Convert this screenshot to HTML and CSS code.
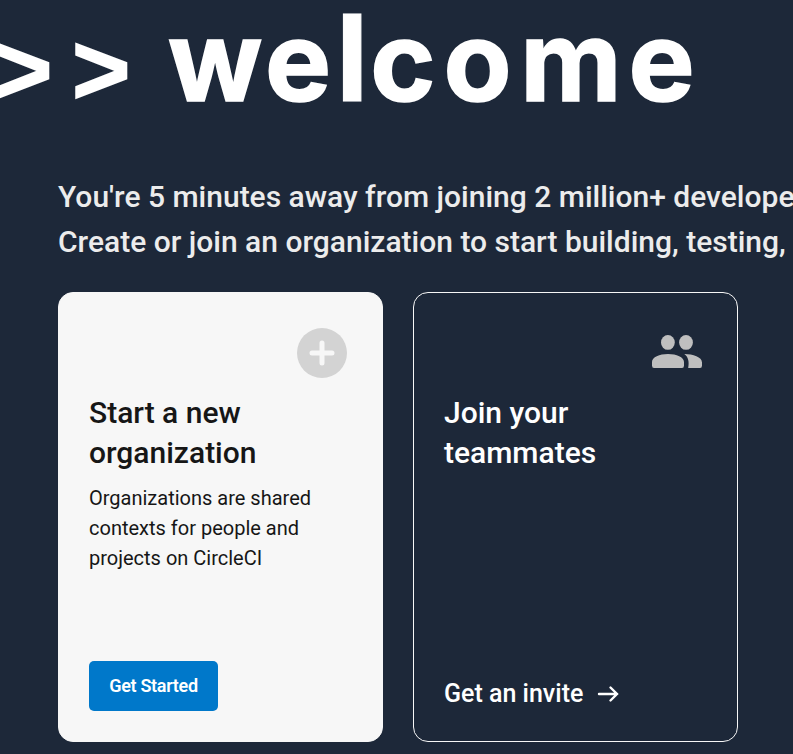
FILE: index.html
```html
<!DOCTYPE html>
<html lang="en">
<head>
<meta charset="utf-8">
<title>Welcome</title>
<link rel="stylesheet" href="styles.css">
</head>
<body>
<main class="page">
  <h1 class="hero"><span class="chevrons">&gt;&gt;</span><span class="word"><span class="kern-w">w</span><span class="kern-e">e</span><span class="tall">l</span><span class="kern-c">c</span><span class="kern-o">o</span><span class="kern-m">m</span>e</span></h1>
  <p class="intro">You're 5 minutes away from joining 2 million+ developers.<br>Create or join an organization to start building, testing, and deploying.</p>
  <section class="cards">
    <article class="card light">
      <svg class="icon" viewBox="0 0 50 50"><circle cx="25" cy="25" r="25" fill="#d3d3d3"/><path d="M25 15v20M15 25h20" stroke="#f7f7f7" stroke-width="5" stroke-linecap="round"/></svg>
      <h2>Start a new organization</h2>
      <p class="desc">Organizations are shared contexts for people and projects on CircleCI</p>
      <button class="button">Get Started</button>
    </article>
    <article class="card dark">
      <svg class="icon" viewBox="0 0 50 50" fill="#bfbfbf"><ellipse cx="15.900" cy="14.400" rx="6.900" ry="7.400"/><ellipse cx="34" cy="14.400" rx="6.900" ry="7.400"/><path d="M0 34C0 29 7.500 26 16 26S32 29 32 34V37.500Q32 40 30 40H2Q0 40 0 37.500ZM32.300 26C41 26 50 29 50 34.500V37.500Q50 40 48 40H36.200C37.300 34 36.500 29 32.300 26Z"/></svg>
      <h2>Join your teammates</h2>
      <a class="invite">Get an invite <svg class="arrow" viewBox="0 0 24 24"><path d="M3 12h18M14.500 5.500L21 12l-6.500 6.500" fill="none" stroke="#fff" stroke-width="2.400" stroke-linecap="round"/></svg></a>
    </article>
  </section>
</main>
</body>
</html>
```
FILE: styles.css
```css
body { margin: 0; background: #1d2839; font-family: Roboto, sans-serif; overflow: hidden; }
.page { width: 793px; height: 754px; overflow: hidden; }
.hero { display: flex; margin: 0; height: 174px; color: #fff; }
.chevrons { flex: none; width: 157px; margin-left: -6px; font: 700 100px/138px "Liberation Sans", sans-serif; letter-spacing: 19.6px; -webkit-text-stroke: 1.8px #fff; }
.word { margin-left: 17px; font: 700 111px/122px Inter, sans-serif; white-space: nowrap; -webkit-text-stroke: 1.6px #fff; }
.kern-w { letter-spacing: 2.5px; }
.kern-e { letter-spacing: 5px; }
.tall { font-size: 119px; line-height: 1px; letter-spacing: 2px; -webkit-text-stroke-width: 1px; }
.kern-c { letter-spacing: 8px; }
.kern-o { letter-spacing: 8.5px; }
.kern-m { letter-spacing: 7px; }
.intro { margin: 0 0 28px 58px; white-space: nowrap; color: #ececec; font-size: 30px; line-height: 45px; font-weight: 500; }
.cards { display: flex; gap: 30px; margin-left: 58px; }
.card { box-sizing: border-box; width: 325px; height: 450px; border: 1px solid #f7f7f7; border-radius: 15px; padding: 35px 35px 30px 30px; display: flex; flex-direction: column; align-items: flex-start; }
.light { background: #f7f7f7; color: #161616; }
.dark { color: #fff; }
.icon { width: 50px; height: 50px; align-self: flex-end; }
h2 { margin: 15px 0 10px; width: 230px; font-size: 30px; line-height: 40px; font-weight: 500; }
.desc { margin: 0; width: 240px; font-size: 20px; line-height: 30px; }
.button { margin-top: auto; width: 129px; height: 50px; border: 0; border-radius: 5px; padding: 0 0 2px; background: #0078ca; color: #fff; font: 600 18px Roboto, sans-serif; letter-spacing: -.3px; }
.invite { display: flex; align-items: center; margin: auto 0 3px; font-size: 25px; line-height: 29px; font-weight: 500; }
.arrow { width: 24px; height: 24px; margin-left: 13px; }
```
